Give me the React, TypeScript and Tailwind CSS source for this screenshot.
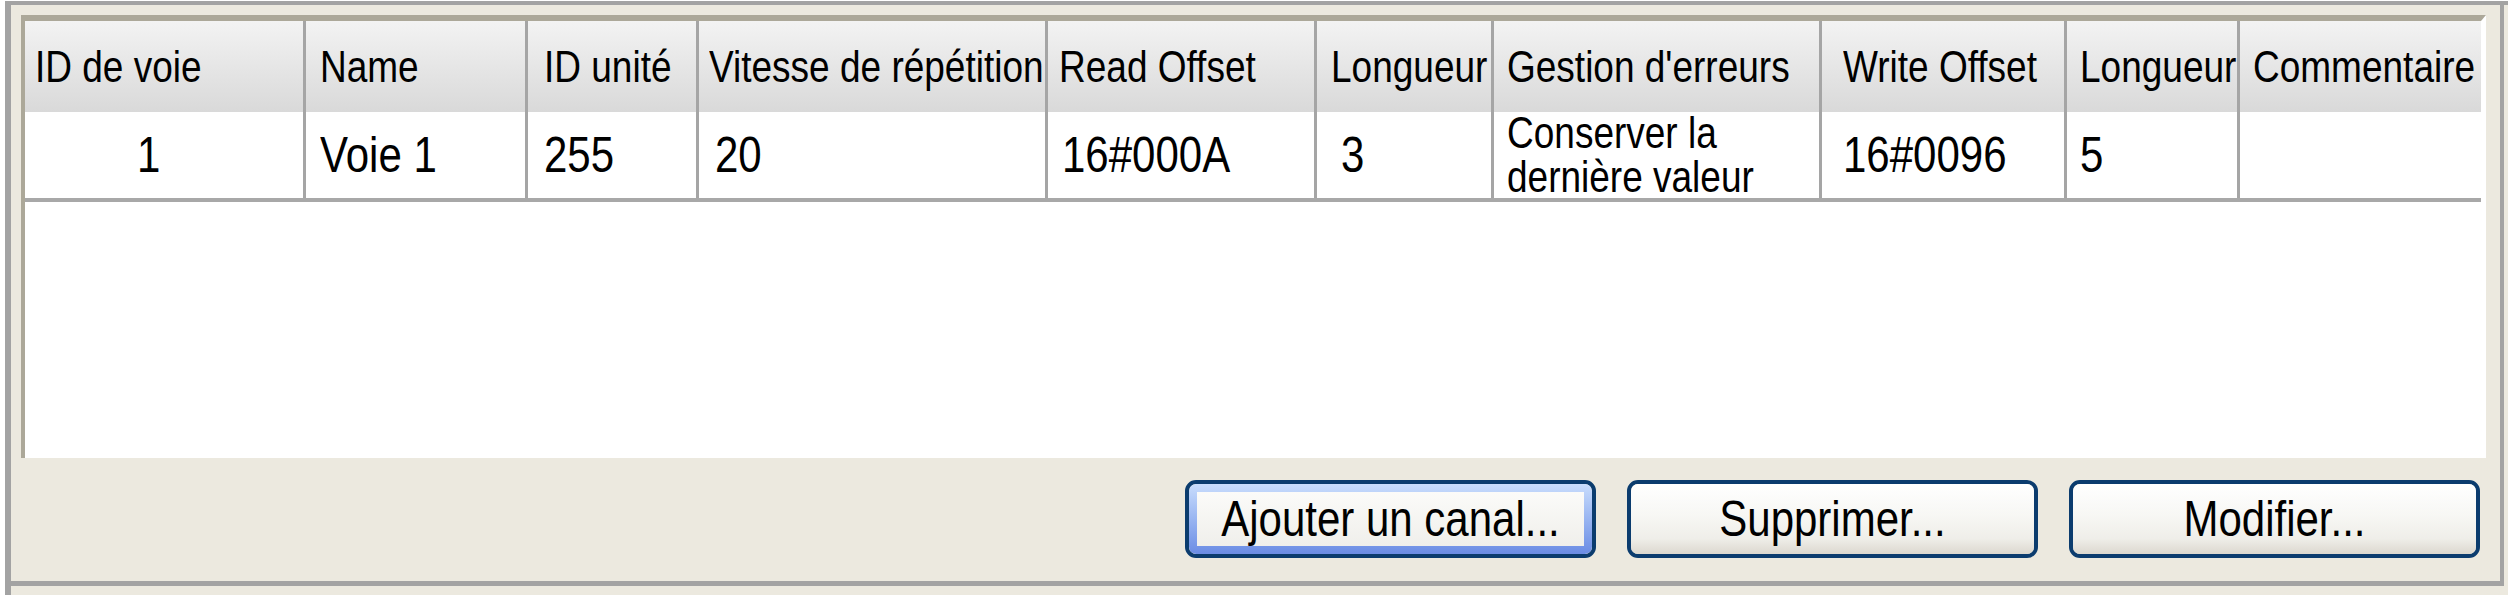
import React from "react";

const cols = [
  { w: 281, hp: 10, dp: 112, h: "ID de voie", d: "1" },
  { w: 222, hp: 14, dp: 14, h: "Name", d: "Voie 1" },
  { w: 171, hp: 16, dp: 16, h: "ID unité", d: "255" },
  { w: 349, hp: 10, dp: 16, h: "Vitesse de répétition", d: "20" },
  { w: 269, hp: 11, dp: 14, h: "Read Offset", d: "16#000A" },
  { w: 177, hp: 14, dp: 24, h: "Longueur", d: "3" },
  { w: 328, hp: 13, dp: 13, h: "Gestion d'erreurs", d: "" },
  { w: 245, hp: 21, dp: 21, h: "Write Offset", d: "16#0096" },
  { w: 173, hp: 13, dp: 13, h: "Longueur", d: "5" },
  { w: 241, hp: 13, dp: 13, h: "Commentaire", d: "" },
];

const font = { fontFamily: '"Liberation Sans", Arial, Helvetica, sans-serif' };

function Button({ label, focused }: { label: string; focused?: boolean }) {
  const text = (
    <span className="inline-block text-[42px] leading-none text-black scale-y-[1.2]">{label}</span>
  );
  return (
    <div className="w-[411px] h-[78px] rounded-[11px] border-[4px] border-[#0b3c6e] overflow-hidden">
      {focused ? (
        <div className="w-full h-full rounded-[7px] bg-gradient-to-b from-[#c9ddfc] to-[#6b8ce4] px-[8px] py-[8px]">
          <div className="w-full h-full bg-gradient-to-b from-[#fbfbf9] to-[#f0efeb] flex items-center justify-center">
            {text}
          </div>
        </div>
      ) : (
        <div className="w-full h-full bg-[linear-gradient(to_bottom,#ffffff_0%,#f7f7f4_45%,#efeee9_78%,#dcd8cf_100%)] flex items-center justify-center">
          {text}
        </div>
      )}
    </div>
  );
}

export default function App() {
  return (
    <div className="w-[2508px] h-[600px] bg-white overflow-hidden pt-[1px] pl-[5px]" style={font}>
      <div className="w-[2503px] h-[594px] bg-[#ece9df] border-l-[6px] border-t-[4px] border-[#a3a3a3]">
        <div className="w-[2493px] h-[581px] border-r-[4px] border-b-[5px] border-[#a3a3a3] pl-[10px] pt-[10px] flex flex-col">
          <div className="w-[2465px] h-[443px] bg-white border-t-[6px] border-l-[4px] border-[#aca899] border-r-[5px] border-r-white flex flex-col">
            <div className="flex h-[91px] bg-gradient-to-b from-[#f3f3f3] to-[#d9d9d9]">
              {cols.map((c, i) => (
                <div
                  key={i}
                  className={`h-full flex items-center text-black whitespace-nowrap overflow-hidden ${i < 9 ? "border-r-[3px] border-[#a5a5a5]" : ""}`}
                  style={{ width: c.w, paddingLeft: c.hp }}
                >
                  <span className="inline-block text-[37px] leading-none scale-y-[1.2]">{c.h}</span>
                </div>
              ))}
            </div>
            <div className="flex h-[90px] border-b-[4px] border-[#a8a8a8]">
              {cols.map((c, i) => (
                <div
                  key={i}
                  className={`h-full flex items-center text-black whitespace-nowrap ${i < 9 ? "border-r-[3px] border-[#a5a5a5]" : ""}`}
                  style={{ width: c.w, paddingLeft: c.dp }}
                >
                  {i === 6 ? (
                    <div className="text-[37px] leading-[37px] scale-y-[1.2]">
                      Conserver la
                      <br />
                      dernière valeur
                    </div>
                  ) : (
                    <span className="inline-block text-[42px] leading-none scale-y-[1.2]">{c.d}</span>
                  )}
                </div>
              ))}
            </div>
          </div>
          <div className="flex justify-end gap-[31px] pr-[20px] pt-[22px]">
            <Button label="Ajouter un canal..." focused />
            <Button label="Supprimer..." />
            <Button label="Modifier..." />
          </div>
        </div>
      </div>
    </div>
  );
}
